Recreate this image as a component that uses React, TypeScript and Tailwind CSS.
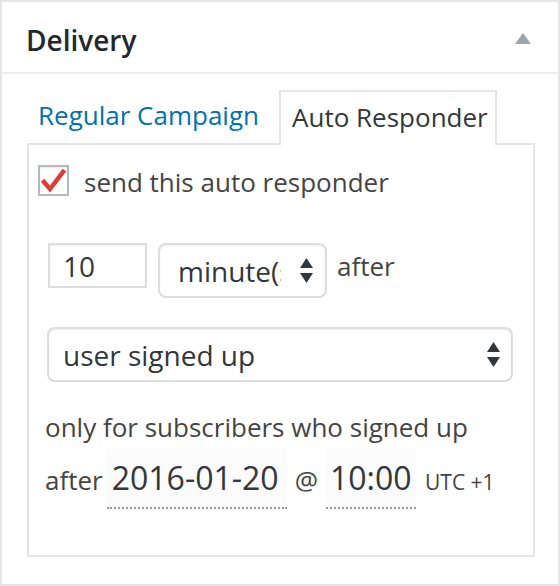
import React from "react"

const FONT = { fontFamily: '"Open Sans", "Liberation Sans", sans-serif' }

function Arrows() {
  return (
    <svg width="13" height="25" viewBox="0 0 13 25" className="shrink-0">
      <polygon points="0,10 6.5,0 13,10" fill="#32373c" />
      <polygon points="0,15 13,15 6.5,25" fill="#32373c" />
    </svg>
  )
}

function Checkbox() {
  return (
    <div className="w-[31px] h-[31px] border-2 border-[#b4b9be] bg-white shadow-[inset_0_1px_2px_rgba(0,0,0,0.08)] relative shrink-0">
      <svg width="31" height="31" viewBox="0 0 31 31" className="absolute -left-[2px] -top-[2px]">
        <polyline
          points="6,17 12,24 25,7"
          fill="none"
          stroke="#dd3d36"
          strokeWidth="4.5"
          strokeLinecap="square"
          strokeLinejoin="miter"
        />
      </svg>
    </div>
  )
}

export default function App() {
  return (
    <div
      className="w-[560px] h-[586px] border-2 border-[#e5e5e5] bg-white text-[#444]"
      style={FONT}
    >
      {/* Header */}
      <div className="h-[72px] flex justify-between items-start border-b-2 border-[#eee] pl-[24px] pr-[27px]">
        <h2 className="mt-[19px] text-[28px] leading-[38px] font-semibold text-[#23282d]">
          Delivery
        </h2>
        <svg width="16" height="11" viewBox="0 0 16 11" className="mt-[31px]">
          <polygon points="0,11 8,0 16,11" fill="#a0a5aa" />
        </svg>
      </div>

      <div className="ml-[25px] mt-[14px]">
        {/* Tabs */}
        <div className="flex items-end">
          <div className="w-[252px] h-[55px] border-2 border-transparent pl-[9px] pt-[7px] text-[26px] leading-[36px] text-[#0073aa]">
            Regular Campaign
          </div>
          <div className="relative z-10 w-[218px] h-[55px] -mb-[2px] border-2 border-b-0 border-[#e5e5e5] bg-white pl-[11px] pt-[7px] text-[26px] leading-[36px] text-[#32373c]">
            Auto Responder
          </div>
        </div>

        {/* Panel */}
        <div className="w-[508px] h-[414px] border-2 border-[#e5e5e5]">
          <div className="flex items-start ml-[9px] mt-[20px]">
            <Checkbox />
            <span className="ml-[15px] -mt-[1px] text-[26px] leading-[36px]">
              send this auto responder
            </span>
          </div>

          <div className="flex items-start ml-[19px] mt-[43px]">
            <div className="w-[99px] h-[45px] border-2 border-[#ddd] shadow-[inset_0_1px_2px_rgba(0,0,0,0.07)] flex items-center pl-[13px] text-[28px] leading-[38px] text-[#32373c]">
              10
            </div>
            <div className="ml-[11px] w-[169px] h-[55px] border-2 border-[#ddd] rounded-[8px] shadow-[inset_0_1px_2px_rgba(0,0,0,0.07)] flex items-center pl-[18px] pr-[12px]">
              <div className="w-[103px] overflow-hidden whitespace-nowrap text-[28px] leading-[38px] text-[#32373c]">
                minute(s)
              </div>
              <div className="flex-1" />
              <Arrows />
            </div>
            <span className="ml-[10px] mt-[5px] text-[26px] leading-[36px]">after</span>
          </div>

          <div className="ml-[18px] mt-[29px] w-[466px] h-[55px] border-2 border-[#ddd] rounded-[8px] shadow-[inset_0_1px_2px_rgba(0,0,0,0.07)] flex items-center justify-between pl-[14px] pr-[11px]">
            <span className="text-[28px] leading-[38px] text-[#32373c]">user signed up</span>
            <Arrows />
          </div>

          <p className="ml-[16px] mt-[27px] text-[26px] leading-[36px]">
            only for subscribers who signed up
          </p>

          <div className="flex items-baseline ml-[16px] mt-[4px]">
            <span className="text-[26px] leading-[36px]">after</span>
            <div className="ml-[4px] w-[180px] h-[60px] pt-[7px] pl-[5px] bg-[#fbfbfb] border-b-2 border-dotted border-[#999] text-[32px] leading-[44px] text-[#32373c]">
              2016-01-20
            </div>
            <span className="ml-[8px] text-[26px] leading-[36px]">@</span>
            <div className="ml-[8px] w-[90px] h-[60px] pt-[7px] pl-[4px] bg-[#fbfbfb] border-b-2 border-dotted border-[#999] text-[32px] leading-[44px] text-[#32373c]">
              10:00
            </div>
            <span className="ml-[9px] text-[21px] leading-[30px]">UTC +1</span>
          </div>
        </div>
      </div>
    </div>
  )
}
